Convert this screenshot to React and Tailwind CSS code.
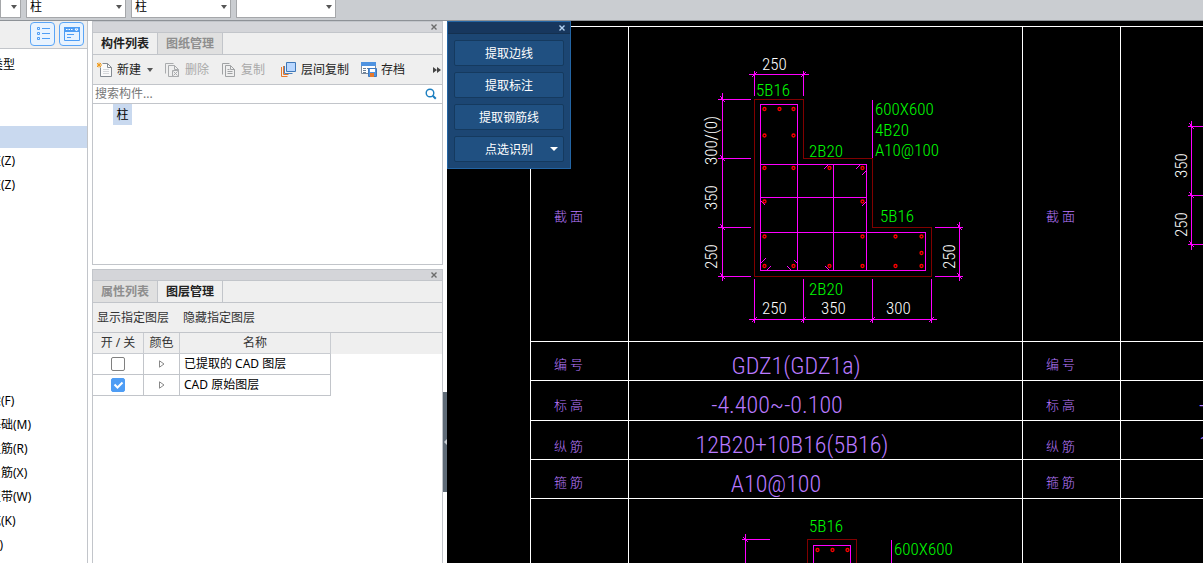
import clsx from "clsx";

const combos = [
  { label: "构件类别", value: "", width: "w-[21px]" },
  { label: "构件类型", value: "柱", width: "w-[100px]" },
  { label: "构件名称", value: "柱", width: "w-[100px]" },
  { label: "分层", value: "", width: "w-[100px]" },
];

const treeRows = [
  "类型", "", "", "selected", "柱(Z)", "柱(Z)", "", "", "", "", "", "", "", "",
  "梁(F)", "基础(M)", "主筋(R)", "负筋(X)", "板带(W)", "坑(K)", "(Y)",
];

const layers = [
  { name: "已提取的 CAD 图层", on: false },
  { name: "CAD 原始图层", on: true },
];

const commands = ["提取边线", "提取标注", "提取钢筋线"];

function Caret({ className }) {
  return (
    <svg viewBox="0 0 6 4" className={clsx("h-[4px] w-[6px] shrink-0 fill-current", className)}>
      <path d="M0 0h6L3 4z" />
    </svg>
  );
}

function CloseButton({ className }) {
  return (
    <button type="button" aria-label="关闭" className={clsx("flex h-2 w-2 items-center justify-center", className)}>
      <svg viewBox="0 0 6 6" className="h-[6px] w-[6px]" stroke="currentColor" strokeWidth="1.4" fill="none">
        <path d="M0.5 0.5l5 5M5.5 0.5l-5 5" />
      </svg>
    </button>
  );
}

function NewIcon() {
  return (
    <svg viewBox="0 0 16 16" className="h-4 w-4" fill="none">
      <path d="M5.5 1.5h5l4 4v9h-11v-9" fill="#fafafa" stroke="#858b92" />
      <path d="M10.5 1.5v4h4" stroke="#858b92" />
      <path d="M6 7.5h6M6 9.5h6M6 11.5h6" stroke="#d5d7da" />
      <path d="M0 1l4 4M4 1L0 5M2 0.500v5M0 3h5" stroke="#f09a1a" />
    </svg>
  );
}

function DeleteIcon() {
  return (
    <svg viewBox="0 0 16 16" className="h-4 w-4" fill="none" stroke="#a9abad">
      <path d="M0.500 11.500v-10h8M3.500 14.500v-11h6l4 4v7z" />
      <path d="M9.500 3.500v4h4" />
      <path d="M7.500 8.500h6v6h-6z" fill="#efefef" />
      <path d="M8.500 9.500l4 4M12.500 9.500l-4 4" />
    </svg>
  );
}

function CopyIcon() {
  return (
    <svg viewBox="0 0 16 16" className="h-4 w-4" fill="none" stroke="#a0a2a4">
      <path d="M1.500 12.500v-11h7M4.500 14.500v-11h5l4 4v7z" />
      <path d="M9.500 3.500v4h4M6.500 7.500h2M6.500 9.500h5M6.500 11.500h5" />
    </svg>
  );
}

function FloorCopyIcon() {
  return (
    <svg viewBox="0 0 16 16" className="h-4 w-4" fill="none">
      <path d="M5.500 0.500h9v9h-9z" fill="#b9d7ff" stroke="#3f78b8" />
      <path d="M3.500 4v7.500h8" stroke="#4b7fbc" />
      <path d="M0.500 5v9.500h6M2.500 4v8.500h5" stroke="#e8792b" />
    </svg>
  );
}

function ArchiveIcon() {
  return (
    <svg viewBox="0 0 16 16" className="h-4 w-4" fill="none">
      <path d="M0.500 0.500h14v11h-14z" fill="#fff" stroke="#7d8b9c" />
      <path d="M0 0h15v4H0z" fill="#4f93e0" />
      <path d="M2 6.500h3M6 6.500h3M10 6.500h3M2 8.500h3M2 10.500h3" stroke="#6c7f95" />
      <path d="M7.500 6.500h8v8h-8z" fill="#4f93e0" stroke="#3f78bd" />
      <path d="M9 7h5v3H9z" fill="#fff" />
      <path d="M9 11h4v4H9z" fill="#e8792b" />
    </svg>
  );
}

function ToolButton({ icon, label, disabled, children }) {
  return (
    <button
      type="button"
      disabled={disabled}
      className={clsx("flex shrink-0 items-center gap-1 whitespace-nowrap", disabled ? "text-[#a9a9a9]" : "text-[#222]")}
    >
      {icon}
      <span>{label}</span>
      {children}
    </button>
  );
}

function PanelTabs({ tabs, active }) {
  return (
    <>
      <div className="flex h-3 shrink-0 items-center justify-end border-y border-[#c2c5ca] bg-[#d4d5d9] pr-1 text-[#6b6b6b]">
        <CloseButton />
      </div>
      <div role="tablist" className="flex h-[22px] shrink-0 border-b border-[#c2c5ca] bg-[#efefef]">
        {tabs.map((tab) => (
          <button
            key={tab}
            type="button"
            role="tab"
            aria-selected={tab === active}
            className={clsx(
              "w-[65px] border-r border-[#c2c5ca] text-center font-bold",
              tab === active ? "bg-[#efefef] text-[#222]" : "bg-[#e0e0e0] text-[#8e8e8e]"
            )}
          >
            {tab}
          </button>
        ))}
      </div>
    </>
  );
}

function NavigationTree() {
  return (
    <aside className="w-[88px] shrink-0 overflow-hidden border-r border-[#c2c5ca] bg-white">
      <div className="flex h-7 items-start justify-end gap-1 border-b border-[#c2c5ca] bg-[#efefef] pt-px pr-[3px]">
        <button type="button" aria-label="列表" className="flex h-6 w-[25px] items-center justify-center rounded-sm border border-[#5aa5f7] bg-[#e8f3ff]">
          <svg viewBox="0 0 14 16" className="h-4 w-[14px]" fill="none" stroke="#4e9df5">
            <path d="M1.500 1.500h2v2h-2zM1.500 6.500h2v2h-2zM1.500 11.500h2v2h-2zM6 2.500h8M6 7.500h8M6 12.500h8" />
          </svg>
        </button>
        <button type="button" aria-label="属性" className="flex h-6 w-[25px] items-center justify-center rounded-sm border border-[#5aa5f7] bg-[#e8f3ff]">
          <svg viewBox="0 0 16 14" className="h-[14px] w-4" fill="none">
            <path d="M0.500 0.500h15v13h-15z" fill="#e8f3ff" stroke="#4e9df5" />
            <path d="M0 0h16v5H0z" fill="#4e9df5" />
            <path d="M2 2.500h1.500M4.500 2.500H6M7 2.500h1.500M11 2h3l-1.500 2z" stroke="#fff" />
            <path d="M3 7.500h7M3 10.500h4" stroke="#4e9df5" />
          </svg>
        </button>
      </div>
      <ul className="-ml-[11px] pt-1">
        {treeRows.map((row, i) => (
          <li key={i} className="flex h-6 items-center whitespace-nowrap text-black">
            {row === "selected" ? <span className="h-[22px] w-full bg-[#c9d9ef]" /> : <span className={clsx(i === 0 && "pl-0.5")}>{row}</span>}
          </li>
        ))}
      </ul>
    </aside>
  );
}

function ComponentPanel() {
  return (
    <section className="flex h-[244px] shrink-0 flex-col border border-t-0 border-[#c2c5ca] bg-white">
      <PanelTabs tabs={["构件列表", "图纸管理"]} active="构件列表" />
      <div className="flex h-[30px] shrink-0 items-center gap-4 border-b border-[#c2c5ca] bg-[#efefef] pl-1">
        <div className="flex items-center gap-3">
          <ToolButton icon={<NewIcon />} label="新建">
            <Caret className="ml-0.5 text-[#555]" />
          </ToolButton>
          <ToolButton icon={<DeleteIcon />} label="删除" disabled />
          <ToolButton icon={<CopyIcon />} label="复制" disabled />
        </div>
        <div className="flex items-center gap-3">
          <ToolButton icon={<FloorCopyIcon />} label="层间复制" />
          <ToolButton icon={<ArchiveIcon />} label="存档" />
        </div>
        <button type="button" aria-label="更多" className="mr-px ml-auto">
          <svg viewBox="0 0 8 6" className="h-[6px] w-2 fill-[#444]">
            <path d="M0 0l4 3-4 3zM4 0l4 3-4 3z" />
          </svg>
        </button>
      </div>
      <div className="flex h-[19px] shrink-0 items-center border-b border-[#c2c5ca] pr-[5px] pl-0.5">
        <input
          type="text"
          aria-label="搜索构件"
          placeholder="搜索构件..."
          className="min-w-0 flex-1 text-xs leading-4 outline-none placeholder:text-[#777]"
        />
        <svg viewBox="0 0 12 12" className="h-3 w-3" fill="none" stroke="#1c7fc0" strokeWidth="1.400">
          <circle cx="5" cy="5" r="3.800" />
          <path d="M7.800 7.800l3 3" strokeWidth="2" />
        </svg>
      </div>
      <div className="min-h-0 flex-1 pl-5">
        <span className="flex h-[21px] w-[19px] items-center justify-center bg-[#c9d9ef] text-black">柱</span>
      </div>
    </section>
  );
}

function LayerPanel() {
  return (
    <section className="mt-1 flex min-h-0 flex-1 flex-col border-x border-[#c2c5ca] bg-white">
      <PanelTabs tabs={["属性列表", "图层管理"]} active="图层管理" />
      <div className="flex h-[30px] shrink-0 items-center gap-[14px] border-b border-[#c2c5ca] bg-[#efefef] pl-1 text-[#333]">
        <button type="button">显示指定图层</button>
        <button type="button">隐藏指定图层</button>
      </div>
      <div className="bg-[linear-gradient(#efefef_21px,#fff_21px)]">
        <table className="w-[238px] table-fixed border-separate border-spacing-0 text-black">
          <thead>
            <tr className="h-[21px] text-[#333]">
              <th className="w-[51px] border-r border-b border-[#c9ccd1] p-0 font-normal">开 / 关</th>
              <th className="w-9 border-r border-b border-[#c9ccd1] p-0 font-normal">颜色</th>
              <th className="border-r border-b border-[#c9ccd1] p-0 font-normal">名称</th>
            </tr>
          </thead>
          <tbody>
            {layers.map((layer) => (
              <tr key={layer.name} className="h-[21px]">
                <td className="border-r border-b border-[#c2c5ca] p-0">
                  <span className="relative mx-auto flex h-[14px] w-[14px]">
                    <input
                      type="checkbox"
                      aria-label={layer.name}
                      defaultChecked={layer.on}
                      className="peer h-[14px] w-[14px] appearance-none rounded-xs border border-[#808080] bg-white checked:border-[#4e9df5] checked:bg-[#4e9df5]"
                    />
                    <svg
                      viewBox="0 0 14 14"
                      className="pointer-events-none absolute inset-0 hidden peer-checked:block"
                      fill="none"
                      stroke="#fff"
                      strokeWidth="2"
                    >
                      <path d="M3.500 6.500l3 3 5-5" />
                    </svg>
                  </span>
                </td>
                <td className="border-r border-b border-[#c2c5ca] p-0">
                  <svg viewBox="0 0 6 8" className="mx-auto h-2 w-[6px]" fill="none" stroke="#888">
                    <path d="M0.500 0.800v6.400L5 4z" />
                  </svg>
                </td>
                <td className="border-r border-b border-[#c2c5ca] p-0 pl-1 whitespace-nowrap">{layer.name}</td>
              </tr>
            ))}
          </tbody>
        </table>
      </div>
    </section>
  );
}

function CommandBox() {
  return (
    <div className="absolute top-0 left-0 w-[124px] border border-[#2364a3] bg-[#1c4673] text-white">
      <div className="flex h-3 items-center justify-end border-b border-[#14304f] bg-[#17375e] pr-1 text-[#b5d3f2]">
        <CloseButton />
      </div>
      <div className="flex flex-col gap-[6px] p-[6px]">
        {commands.map((command) => (
          <button key={command} type="button" className="h-[26px] rounded-xs border border-[#153a5f] bg-[#205081] pt-0.5">
            {command}
          </button>
        ))}
        <button type="button" className="relative h-[26px] rounded-xs border border-[#153a5f] bg-[#205081] pt-0.5">
          点选识别
          <svg viewBox="0 0 8 4" className="absolute top-[10px] right-[5px] h-1 w-2 fill-current">
            <path d="M0 0h8L4 4z" />
          </svg>
        </button>
      </div>
    </div>
  );
}

const gridX = [83.5, 181.5, 575.5, 673.5];
const gridY = [5.5, 320.5, 359.5, 399.5, 438.5, 477.5];

const bars = [
  [317.5, 88], [332.5, 88], [346.5, 88],
  [317.5, 114.5], [346.5, 114.5],
  [317.5, 147], [346.5, 147], [382.5, 147], [415.5, 147],
  [317.5, 180.5], [415.5, 180.5],
  [317.5, 215.5], [415.5, 215.5], [448.5, 215.5], [474.5, 215.5],
  [474.5, 232],
  [317.5, 245], [346.5, 245], [382.5, 245], [415.5, 245], [448.5, 245], [474.5, 245],
  [370.5, 529], [385.5, 529], [400.5, 529],
];

// x, y, text
const rebarNotes = [
  [309, 75, "5B16"],
  [362, 136, "2B20"],
  [428, 94, "600X600"],
  [428, 115, "4B20"],
  [428, 135, "A10@100"],
  [433, 201, "5B16"],
  [362, 274, "2B20"],
  [362, 511, "5B16"],
  [447, 534, "600X600"],
  [447, 555, "4B20"],
];

const sizes = [
  [315, 49, "250"],
  [315, 293, "250"],
  [374, 293, "350"],
  [439, 293, "300"],
];

const verticalSizes = [
  [270, 144, "300/(0)"],
  [270, 189, "350"],
  [270, 248, "250"],
  [508, 248, "250"],
  [740, 157, "350"],
  [740, 216, "250"],
];

const rowTitles = [
  [200, "截 面"],
  [348, "编 号"],
  [389, "标 高"],
  [430, "纵 筋"],
  [466, "箍 筋"],
];

const rowValues = [
  [349, 353, "GDZ1(GDZ1a)"],
  [330, 392, "-4.400~-0.100"],
  [345, 432, "12B20+10B16(5B16)"],
  [329, 471, "A10@100"],
];

function Drawing() {
  return (
    <svg
      className="block h-full w-full font-['Roboto_Condensed','Roboto','Noto_Sans_CJK_SC',sans-serif] font-light"
      aria-label="柱大样"
    >
      <g stroke="#fff" shapeRendering="crispEdges">
        {gridX.map((x) => (
          <line key={x} x1={x} x2={x} y1="5" y2="100%" />
        ))}
        {gridY.map((y) => (
          <line key={y} x1="83" x2="100%" y1={y} y2={y} />
        ))}
      </g>

      <g fill="none" stroke="#800000" shapeRendering="crispEdges">
        <path d="M307.500 78.500H356.500V137.500H425.500V206.500H484.500V255.500H307.500Z" />
        <path d="M360.500 600V518.500H409.500V600" />
      </g>

      <g fill="none" stroke="#f0f" shapeRendering="crispEdges">
        <path d="M313.500 83.500H350.500V249.500H313.500ZM313.500 143.500H419.500V249.500M313.500 176.500H419.500M386.500 143.500V249.500M313.500 211.500H478.500V249.500H313.500" />
        <path d="M377 148l4-4M409 148l4-4M415 154l4-4M314 180l4 4M415 185l4-4M314 242l5-5M320 249l4-4M340 245l4 4M347 239l3 3M378 245l4 4" />
        <path d="M302 53.500H362M307.500 50V75M356.500 50V75M305 56l5-5M354 56l5-5" />
        <path d="M275.500 72V260M271 78.500H304M271 137.500H304M271 206.500H304M271 255.500H304M273 75l5 6M273 134l5 6M273 203l5 6M273 252l5 6" />
        <path d="M302 298.500H490M307.500 258V302M356.500 258V302M425.500 258V302M484.500 258V302M305 301l5-5M354 301l5-5M423 301l5-5M482 301l5-5" />
        <path d="M512.500 201V260M488 206.500H516M488 255.500H516M510 203l5 6M510 252l5 6" />
        <path d="M425.500 79V137M444.500 519V600" />
        <path d="M298.500 513V600M295 518.500H323M296 516l5 5M366.500 600V524.500H403.500V600" />
        <path d="M744.500 100V229M741 105.500H900M741 174.500H900M741 223.500H900M742 102l5 6M742 171l5 6M742 220l5 6" />
      </g>

      <g fill="none" stroke="#f00" strokeWidth="1.300">
        {bars.map(([x, y]) => (
          <circle key={`${x}-${y}`} cx={x} cy={y} r="1.500" />
        ))}
      </g>

      <g fill="#0f0" fontSize="17">
        {rebarNotes.map(([x, y, text]) => (
          <text key={`${x}-${y}`} x={x} y={y}>{text}</text>
        ))}
      </g>

      <g fill="#fff" fontSize="17">
        {sizes.map(([x, y, text]) => (
          <text key={`${x}-${y}`} x={x} y={y}>{text}</text>
        ))}
        {verticalSizes.map(([x, y, text]) => (
          <text key={`${x}-${y}`} transform={`translate(${x} ${y}) rotate(-90)`}>{text}</text>
        ))}
      </g>

      <g fill="#b97aff">
        {rowTitles.map(([y, text]) => (
          <g key={text} fontSize="13">
            <text x="107" y={y}>{text}</text>
            <text x="599" y={y}>{text}</text>
          </g>
        ))}
        <g fontSize="24" textAnchor="middle">
          {rowValues.map(([x, y, text]) => (
            <text key={text} x={x} y={y}>{text}</text>
          ))}
        </g>
        <g fontSize="24">
          <text x="752" y="392">-4.400~-0.100</text>
          <text x="752" y="432">12B20</text>
        </g>
      </g>
    </svg>
  );
}

export default function App() {
  return (
    <div className="flex h-screen flex-col overflow-hidden bg-white font-['Noto_Sans','Noto_Sans_CJK_SC',sans-serif] text-xs leading-4">
      <header className="flex h-[21px] shrink-0 items-end gap-[5px] overflow-hidden border-b border-[#8e9297] bg-[#cacdd1] pb-[2px]">
        {combos.map((combo) => (
          <div key={combo.label} className={clsx("relative h-[22px] shrink-0", combo.width)}>
            <select
              aria-label={combo.label}
              defaultValue={combo.value}
              className="block h-[22px] w-full appearance-none border border-[#a5a7aa] bg-white pl-[3px] text-black"
            >
              <option value={combo.value}>{combo.value}</option>
            </select>
            <Caret className="pointer-events-none absolute top-[9px] right-1 text-[#555]" />
          </div>
        ))}
      </header>

      <div className="flex min-h-0 flex-1">
        <NavigationTree />
        <div className="ml-1 flex w-[351px] shrink-0 flex-col">
          <ComponentPanel />
          <LayerPanel />
        </div>
        <div className="w-1 shrink-0 pt-[371px]">
          <button type="button" aria-label="收起" className="flex h-[100px] w-1 items-center justify-center bg-[#5f6b77]">
            <svg viewBox="0 0 3 6" className="h-[6px] w-[3px] fill-[#c9ced4]">
              <path d="M3 0v6L0 3z" />
            </svg>
          </button>
        </div>
        <main className="relative min-w-0 flex-1 overflow-hidden bg-black">
          <Drawing />
          <CommandBox />
        </main>
      </div>
    </div>
  );
}
